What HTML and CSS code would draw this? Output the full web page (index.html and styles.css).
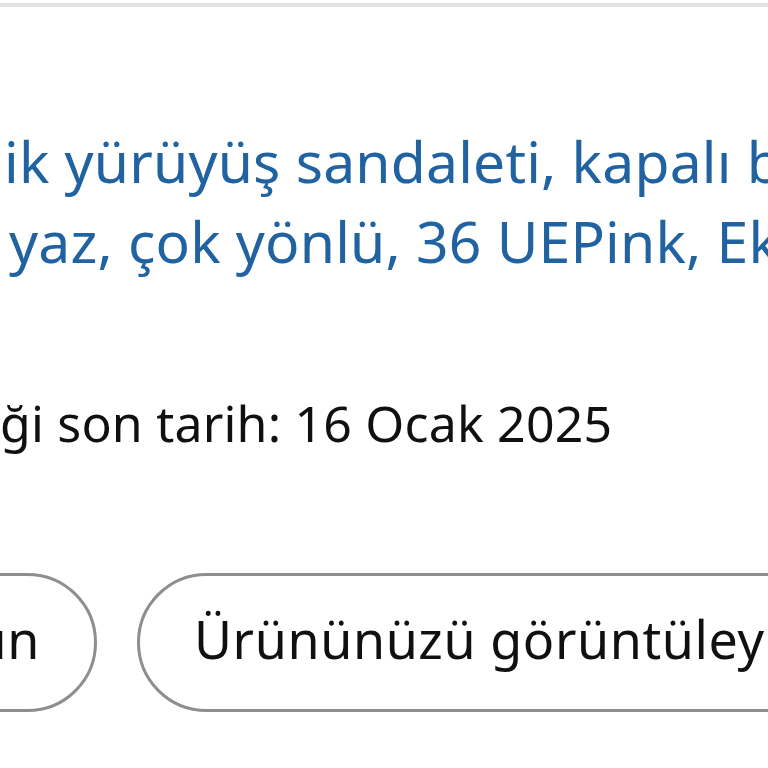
FILE: index.html
```html
<!DOCTYPE html>
<html lang="tr">
<head>
  <meta charset="UTF-8" />
  <title>Sipariş ayrıntıları</title>
  <link rel="stylesheet" href="styles.css">
</head>
<body>

  <div class="rule"></div>

  <div id="item">
    <a class="title" href="#">
      <span class="line first">ik yürüyüş sandaleti, kapalı burun</span>
      <span class="line second">yaz, çok yönlü, 36 UEPink, Ekru</span>
    </a>

    <div class="return">ği son tarih: 16 Ocak 2025</div>

    <div id="actions">
      <div class="clip">
        <button class="pill">Satıcıya bir soru sorun</button>
      </div>
      <button class="pill">Ürününüzü görüntüleyin</button>
    </div>
  </div>

</body>
</html>
```

FILE: styles.css
```css
body {
  margin: 0;
  padding: 0;
  background: #fff;
  font-family: "Noto Sans", "Open Sans", sans-serif;
  color: #0f1111;
  overflow: hidden;
}
.rule {
  height: 4px;
  margin-top: 3px;
  background: #e3e3e3;
}
#item {
  padding-top: 114px;
}
.title {
  display: block;
  color: #2162a1;
  text-decoration: none;
  font-size: 57px;
  line-height: 80px;
  letter-spacing: 0.2px;
}
.title .line {
  display: block;
  white-space: nowrap;
}
.title .first {
  padding-left: 4px;
}
.title .second {
  padding-left: 9px;
}
.return {
  margin-top: 107px;
  font-size: 50px;
  line-height: 70px;
  letter-spacing: 0.2px;
  white-space: nowrap;
}
#actions {
  display: flex;
  gap: 40px;
  margin-top: 115px;
}
#actions .clip {
  width: 97px;
  flex-shrink: 0;
  display: flex;
  justify-content: flex-end;
}
.pill {
  flex-shrink: 0;
  height: 139px;
  padding: 0 54px 8px;
  border: 3px solid #8c8f8f;
  border-radius: 70px;
  background: #fff;
  color: #0f1111;
  font-family: inherit;
  font-size: 52px;
  letter-spacing: 0.6px;
  white-space: nowrap;
}
```
